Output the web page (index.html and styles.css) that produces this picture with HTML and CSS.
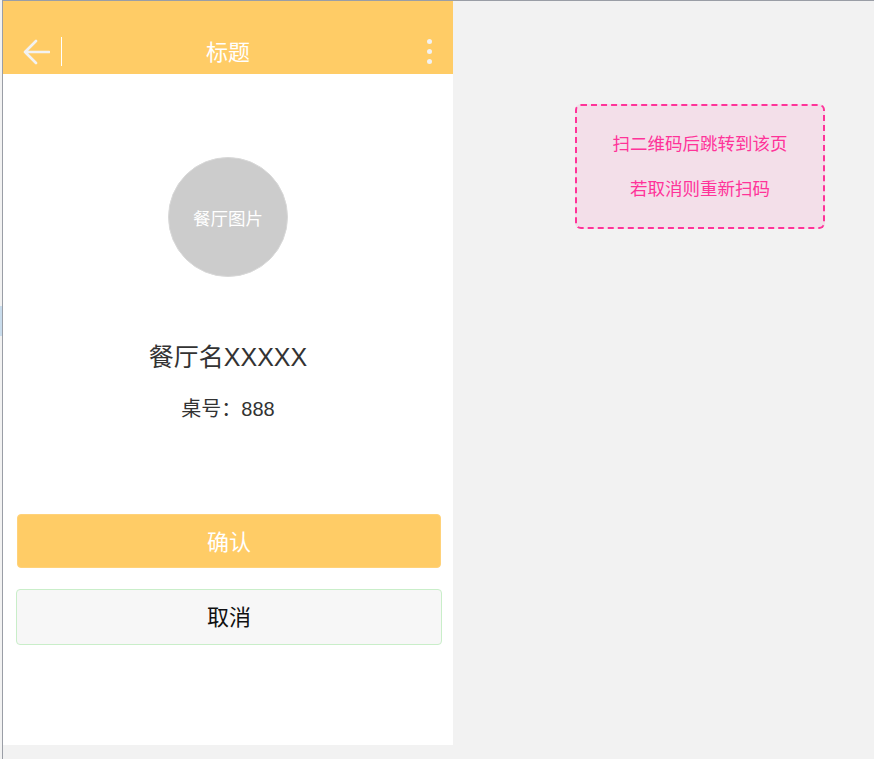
FILE: index.html
```html
<!DOCTYPE html>
<html lang="zh">
<head>
<meta charset="utf-8">
<title>标题</title>
<link rel="stylesheet" href="styles.css">
</head>
<body>
<div class="frame">
  <div class="side-mark"></div>
  <div class="phone">
    <header class="topbar">
      <span class="back">
        <svg width="28" height="26" viewBox="0 0 28 26"><path d="M14 2 L3 13 L14 24 M3 13 H27" fill="none" stroke="#f2f2f2" stroke-width="2.6" stroke-linecap="round" stroke-linejoin="round"/></svg>
      </span>
      <span class="divider"></span>
      <h1 class="title">标题</h1>
      <span class="more"><i></i><i></i><i></i></span>
    </header>
    <main class="content">
      <div class="avatar">餐厅图片</div>
      <div class="name">餐厅名XXXXX</div>
      <div class="table">桌号：888</div>
      <button class="btn confirm">确认</button>
      <button class="btn cancel">取消</button>
    </main>
  </div>
  <div class="canvas">
    <div class="note">
      <p>扫二维码后跳转到该页</p>
      <p>若取消则重新扫码</p>
    </div>
  </div>
</div>
</body>
</html>
```
FILE: styles.css
```css
html, body {
  margin: 0;
  padding: 0;
  background: #f2f2f2;
  font-family: "Liberation Sans", "Noto Sans CJK SC", sans-serif;
}
.frame {
  position: relative;
  margin-left: 2px;
  height: 758px;
  border-top: 1px solid #9a9ea6;
  border-left: 1px solid #9a9ea6;
  display: flex;
  align-items: flex-start;
}
.side-mark {
  position: absolute;
  left: -3px;
  top: 305px;
  width: 2px;
  height: 30px;
  background: #c9dcec;
}
.phone {
  width: 450px;
  height: 744px;
  background: #fff;
  display: flex;
  flex-direction: column;
}
.topbar {
  height: 73px;
  background: #ffcc66;
  display: flex;
  align-items: center;
  padding-top: 28px;
  box-sizing: border-box;
  position: relative;
}
.back {
  width: 28px;
  height: 26px;
  margin-left: 19px;
  display: flex;
}
.divider {
  width: 1px;
  height: 29px;
  background: #fff;
  margin-left: 11px;
}
.title {
  position: absolute;
  left: 0;
  right: 0;
  top: 34px;
  margin: 0;
  text-align: center;
  font-weight: normal;
  font-size: 22px;
  line-height: 30px;
  color: #fff;
  font-family: "Noto Sans CJK SC", sans-serif;
  pointer-events: none;
}
.more {
  margin-left: auto;
  margin-right: 21px;
  display: flex;
  flex-direction: column;
  gap: 5px;
}
.more i {
  display: block;
  width: 5px;
  height: 5px;
  border-radius: 50%;
  background: #f2f2f2;
}
.content {
  display: flex;
  flex-direction: column;
  align-items: center;
  padding-top: 83px;
  padding-left: 2px;
}
.avatar {
  width: 118px;
  height: 118px;
  border-radius: 50%;
  background: #cccccc;
  border: 1px solid #d8d8d8;
  color: #fff;
  font-size: 17.5px;
  font-family: "Noto Sans CJK SC", sans-serif;
  display: flex;
  align-items: center;
  justify-content: center;
  margin-right: 2px;
}
.name {
  margin-top: 64px;
  font-size: 25px;
  line-height: 32px;
  color: #333;
  margin-right: 2px;
}
.table {
  margin-top: 24px;
  font-size: 20px;
  line-height: 24px;
  color: #333;
  margin-right: 2px;
}
.btn {
  display: block;
  font-family: "Noto Sans CJK SC", sans-serif;
  font-size: 22px;
  border-radius: 4px;
  box-sizing: border-box;
  cursor: pointer;
}
.confirm {
  margin-top: 93px;
  width: 424px;
  height: 54px;
  background: #ffcc66;
  border: 1px solid #ffd27a;
  color: #fff;
  padding-bottom: 4px;
}
.cancel {
  margin-top: 21px;
  width: 426px;
  height: 56px;
  background: #f7f7f7;
  border: 1px solid #c9eec9;
  color: #111;
  padding-bottom: 6px;
}
.canvas {
  flex: 1;
  padding-top: 103px;
  padding-left: 122px;
}
.note {
  width: 250px;
  height: 125px;
  box-sizing: border-box;
  background: #f3dfe9;
  border: 2px dashed #ff3399;
  border-radius: 6px;
  color: #ff3399;
  font-size: 17.5px;
  font-family: "Noto Sans CJK SC", sans-serif;
  text-align: center;
  padding-top: 26px;
}
.note p {
  margin: 0;
  line-height: 22px;
}
.note p + p {
  margin-top: 23px;
}
```
